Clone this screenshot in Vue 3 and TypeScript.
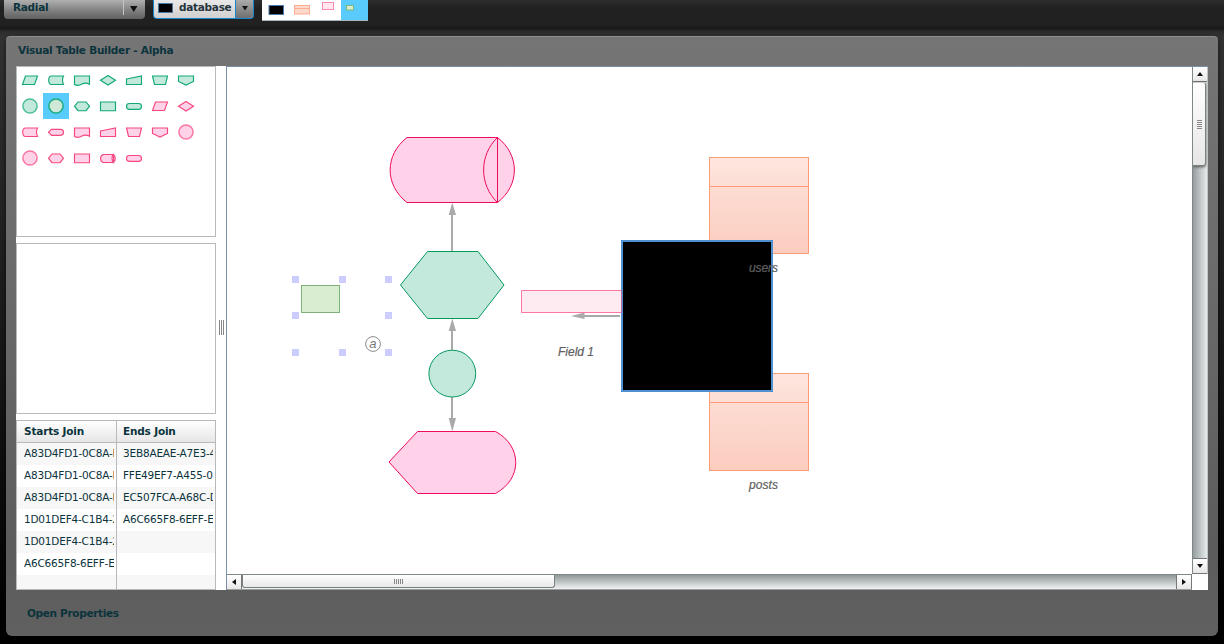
<script setup lang="ts">
interface PaletteItem {
  d: string
  tone: 'green' | 'pink'
  round?: boolean
  selected?: boolean
}

const para = 'M8.5 9H20.5L17.5 17.5H5.5Z'
const stored = 'M8.5 9H20.5Q18.5 13 20.5 17.5H8.5C4.8 17.500 4.800 9 8.500 9Z'
const doc = 'M5.5 9H20.5V17.2Q16.5 15 13 17Q9 19.5 5.5 17.5Z'
const diamond = 'M13 8.5L20.5 13.2L13 18L5.5 13.2Z'
const manual = 'M5.5 12L20.5 9V17.5H5.5Z'
const trapezoid = 'M5.5 9H20.5L18.5 17.5H7.5Z'
const offpage = 'M5.5 9H20.5V14.5L13 18L5.5 14.5Z'
const hexagon = 'M9 9H17L20.5 13.2L17 17.700H9L5.500 13.2Z'
const rect = 'M5.5 9H20.500V17.700H5.500Z'
const pill = 'M8.5 10.5H17.5C21.500 10.5 21.500 16.300 17.5 16.300H8.5C4.500 16.300 4.500 10.5 8.5 10.5Z'
const display = 'M5.5 13.2L8.500 10.300H17.5C21.500 10.300 21.500 16.300 17.5 16.300H8.500Z'
const drum = 'M8.500 9.500H18C21 10.800 21 16.300 18 17.500H8.500C4.600 16.500 4.600 10.500 8.500 9.500ZM18.500 9.500C16.500 11 16.500 16 18.500 17.500Z'

const palette: PaletteItem[] = [
  { d: para, tone: 'green' },
  { d: stored, tone: 'green' },
  { d: doc, tone: 'green' },
  { d: diamond, tone: 'green' },
  { d: manual, tone: 'green' },
  { d: trapezoid, tone: 'green' },
  { d: offpage, tone: 'green' },
  { d: '', tone: 'green', round: true },
  { d: '', tone: 'green', round: true, selected: true },
  { d: hexagon, tone: 'green' },
  { d: rect, tone: 'green' },
  { d: pill, tone: 'green' },
  { d: para, tone: 'pink' },
  { d: diamond, tone: 'pink' },
  { d: stored, tone: 'pink' },
  { d: display, tone: 'pink' },
  { d: doc, tone: 'pink' },
  { d: manual, tone: 'pink' },
  { d: trapezoid, tone: 'pink' },
  { d: offpage, tone: 'pink' },
  { d: '', tone: 'pink', round: true },
  { d: '', tone: 'pink', round: true },
  { d: hexagon, tone: 'pink' },
  { d: rect, tone: 'pink' },
  { d: drum, tone: 'pink' },
  { d: pill, tone: 'pink' },
]

const joins: [string, string][] = [
  ['A83D4FD1-0C8A-F', '3EB8AEAE-A7E3-4'],
  ['A83D4FD1-0C8A-F', 'FFE49EF7-A455-0'],
  ['A83D4FD1-0C8A-F', 'EC507FCA-A68C-D'],
  ['1D01DEF4-C1B4-2', 'A6C665F8-6EFF-E'],
  ['1D01DEF4-C1B4-2', ''],
  ['A6C665F8-6EFF-E', ''],
  ['', ''],
]

const handles: [number, number][] = [
  [292, 276], [339, 276], [385, 276],
  [292, 312], [385, 312],
  [292, 349], [339, 349], [385, 349],
]
</script>

<template>
  <div class="app">
    <header class="toolbar">
      <div class="combo radial">
        <span class="combo-label">Radial</span>
        <i class="sep"></i>
        <svg class="caret" width="8" height="6"><path d="M0 0H7.5L3.75 6Z" /></svg>
      </div>
      <div class="combo database">
        <span class="chip"></span>
        <span class="combo-label">database</span>
        <span class="drop"><svg width="6" height="5"><path d="M0 0H6L3 4.5Z" /></svg></span>
      </div>
      <svg class="swatches" width="106" height="21">
        <rect width="106" height="21" fill="#fff" />
        <rect x="79" width="27" height="21" fill="#5acbfd" />
        <path d="M0 20.5H106" stroke="#a9b6bc" />
        <rect x="7" y="5.500" width="14.500" height="9" stroke="#4b78ad" />
        <rect x="32.500" y="5.500" width="15" height="8.500" fill="#fdd8cb" stroke="#fbae92" />
        <path d="M32 8.500H48" stroke="#fbae92" />
        <rect x="60.500" y="2.500" width="11" height="7" fill="#fee7ef" stroke="#fa8bb2" />
        <rect x="84.500" y="5.500" width="7" height="4.500" fill="#d9edcf" stroke="#7cb87d" />
      </svg>
    </header>

    <main class="panel">
      <h1>Visual Table Builder - Alpha</h1>
      <div class="work">
        <aside>
          <section class="box palette">
            <svg
              v-for="(item, i) in palette"
              :key="i"
              :class="['shape', item.tone, { selected: item.selected }]"
              width="26"
              height="26"
            >
              <circle v-if="item.round" cx="13" cy="13" r="7.100" />
              <path v-else :d="item.d" />
            </svg>
          </section>
          <section class="box"></section>
          <section class="box grid">
            <div class="row head"><span>Starts Join</span><span>Ends Join</span></div>
            <div v-for="(join, i) in joins" :key="i" class="row">
              <span><b>{{ join[0] }}</b></span><span><b>{{ join[1] }}</b></span>
            </div>
          </section>
        </aside>
        <div class="divider"><i></i></div>
        <div class="viewport">
          <svg class="canvas" width="965" height="507" viewBox="227 67 965 507">
            <defs>
              <linearGradient id="tableTop" x2="0" y2="1">
                <stop stop-color="#fde6df" /><stop offset="1" stop-color="#fcded4" />
              </linearGradient>
              <linearGradient id="tableBody" x2="0" y2="1">
                <stop stop-color="#fcdcd2" /><stop offset="1" stop-color="#fbcdbf" />
              </linearGradient>
            </defs>
            <g class="links">
              <path d="M452 251V212M452 350V329M452 397V420M620 316H583" />
              <path class="tip" d="M452.300 202.500L456 215H448.700ZM452.300 318.500L456 331H448.700ZM452.300 431.500L456 418H448.700ZM571 316L584.500 312.500V319Z" />
            </g>
            <g class="pink">
              <path d="M407 137.500H497.500C520 155 520 185 497.500 202.500H407C384.500 185 384.500 155 407 137.500Z" />
              <path d="M497.500 137.500C479 155 479 185 497.500 202.500Z" />
              <path d="M389 462L417.500 431.500H495.500C522.500 446 522.500 479 495.500 493.500H417.500Z" />
            </g>
            <g class="green">
              <path d="M427.500 251.500H478L504 285L478 318.500H427.500L400.500 285Z" />
              <circle cx="452.300" cy="373.600" r="23.400" />
            </g>
            <g class="table">
              <rect x="709.500" y="157.500" width="99" height="29" fill="url(#tableTop)" />
              <rect x="709.500" y="186.500" width="99" height="67" fill="url(#tableBody)" />
              <rect x="709.500" y="373.500" width="99" height="29" fill="url(#tableTop)" />
              <rect x="709.500" y="402.500" width="99" height="68" fill="url(#tableBody)" />
            </g>
            <rect x="622" y="241" width="150" height="150" stroke="#4f90d0" stroke-width="2" />
            <path d="M622 290.500H521.500V312.500H622" fill="#feeaf1" stroke="#fa77a7" />
            <path d="M621.500 290V313" stroke="#b76ba0" />
            <rect x="301.500" y="285.500" width="38" height="27" fill="#d9eed0" stroke="#7cb17b" />
            <rect v-for="(h, i) in handles" :key="i" :x="h[0]" :y="h[1]" width="7" height="7" fill="#ccccff" />
            <circle cx="373" cy="344" r="7.400" fill="#fff" stroke="#8c8c8c" />
            <text class="anchor" x="369.200" y="347.500">a</text>
            <text x="749" y="272" textLength="29">users</text>
            <text x="749" y="489" textLength="29">posts</text>
            <text x="558" y="356" textLength="36">Field 1</text>
          </svg>
          <div class="vbar">
            <span class="arrow"><svg width="6" height="4"><path d="M0 4H6L3 0Z" /></svg></span>
            <span class="thumb"><i></i></span>
            <span class="arrow end"><svg width="6" height="4"><path d="M0 0H6L3 4Z" /></svg></span>
          </div>
          <div class="hbar">
            <span class="arrow"><svg width="4" height="6"><path d="M4 0V6L0 3Z" /></svg></span>
            <span class="thumb"><i></i></span>
            <span class="arrow end"><svg width="4" height="6"><path d="M0 0V6L4 3Z" /></svg></span>
          </div>
          <div class="corner"></div>
        </div>
      </div>
      <footer>Open Properties</footer>
    </main>
  </div>
</template>

<style>
body { margin: 0; background: #000; overflow: hidden; }
</style>

<style scoped>
* { box-sizing: border-box; }
svg { display: block; flex: none; }
.app {
  width: 1224px;
  height: 644px;
  overflow: hidden;
  background: linear-gradient(#333 30px, #242424 200px, #060606 560px, #000 620px);
  font-family: "DejaVu Sans", Verdana, sans-serif;
  font-size: 10.5px;
  color: #0b333c;
}
.toolbar {
  height: 36px;
  display: flex;
  align-items: flex-start;
  padding-left: 4px;
  background: linear-gradient(#2d2d2d, #212121 8px, #212121 25px, #171717 28px, #2d2d2d 32px, #333);
}
.combo { display: flex; height: 19px; border-radius: 0 0 4px 4px; font-weight: bold; line-height: 14px; letter-spacing: -.28px; }
.radial {
  width: 141px;
  padding-left: 9px;
  background: linear-gradient(#b0b0b0, #7a7a7a 12px, #606060);
}
.radial .combo-label { width: 110px; }
.radial .sep { width: 1px; height: 15px; background: #c5c5c5; }
.radial .caret { margin: 6px 0 0 6px; fill: #111; }
.database {
  width: 101px;
  margin-left: 8px;
  background: linear-gradient(#e8e8e8, #d0d0d0);
  border: 1px solid #1686d1;
  border-top: 0;
  color: #25333c;
  overflow: hidden;
}
.chip { width: 15px; height: 10px; margin: 3px 6px 0 4px; background: #000; border: 1px solid #4a76a8; }
.database .combo-label { width: 56px; white-space: nowrap; }
.drop { flex: 1; border-left: 1px solid #1686d1; background: linear-gradient(#aaa, #707070); padding: 6px 0 0 6px; }
.drop svg { fill: #151515; }
.swatches { margin-left: 8px; }
.panel {
  width: 1212px;
  height: 600px;
  margin-left: 6px;
  padding: 0 10px;
  border-radius: 4px 4px 6px 6px;
  border-top: 1px solid #8e8e8e;
  background: linear-gradient(#757575, #6b6b6b 240px, #5c5c5c 510px, #606060);
  box-shadow: 0 2px 5px #0009;
}
h1 { margin: 0; height: 29px; padding: 6px 0 0 2px; font-size: 10.5px; line-height: 14px; letter-spacing: -.25px; }
.work { display: flex; width: 1192px; height: 524px; background: #fff; }
aside { width: 200px; display: grid; grid-template-rows: 171px 171px 170px; row-gap: 6px; }
.box { border: 1px solid #b7babc; background: #fff; overflow: hidden; }
.palette { display: grid; grid-template-columns: repeat(7, 26px); grid-auto-rows: 26px; align-content: start; }
.shape.selected { background: #5acbfd; }
.green { fill: #c3e8dc; stroke: #06995e; }
.pink { fill: #ffd2e9; stroke: #ef0b5d; }
.shape.green { stroke: #10a974; stroke-width: 1.15; }
.shape.pink { stroke: #f6487f; stroke-width: 1.15; }
.shape circle { stroke-width: 1.5; stroke-opacity: .7; }
.shape.selected circle { fill: #cfe8d8; stroke-opacity: .9; }
.row { display: flex; height: 22px; line-height: 20px; }
.row:nth-child(even) { background: #f7f7f7; }
.row span { width: 99px; padding: 0 2px 0 7px; white-space: nowrap; overflow: hidden; }
.row span + span { padding-left: 6px; border-left: 1px solid #b7babc; }
.row b { display: block; overflow: hidden; height: 22px; font-weight: normal; font-size: 10.5px; letter-spacing: -.2px; }
.row.head { height: 22px; line-height: 20px; font-weight: bold; letter-spacing: -.18px; border-bottom: 1px solid #b7babc; background: linear-gradient(#fff, #e6e6e6); }
.divider { width: 10px; padding: 254px 0 0 3px; }
.divider i { display: block; width: 5px; height: 15px; background: repeating-linear-gradient(90deg, #888 0 1px, transparent 1px 2px); }
.viewport {
  width: 982px;
  height: 524px;
  display: grid;
  grid-template-columns: 965px 16px;
  grid-template-rows: 507px 16px;
  border-left: 1px solid #7c8ea8;
  border-top: 1px solid #7c8ea8;
}
.canvas text { font: italic 12px "Liberation Sans", Arial, sans-serif; fill: #606060; stroke: #606060; stroke-width: .2px; }
.canvas .anchor { font-size: 13px; fill: #777; stroke: none; }
.links { fill: none; stroke: #aaa; stroke-width: 2; }
.links .tip { fill: #aaa; stroke: none; }
.table { stroke: #fb9b78; }
.vbar, .hbar { display: flex; overflow: hidden; }
.vbar { flex-direction: column; border-left: 1px solid #7f8788; border-right: 1px solid #bfc3c4; background: linear-gradient(90deg, #959d9e, #e8ebeb); }
.hbar { border-top: 1px solid #7f8788; border-bottom: 1px solid #989d9e; background: linear-gradient(#8f9899, #f0f2f2); }
.arrow { display: grid; place-items: center; flex: none; background: linear-gradient(#fff, #e8e8e8); fill: #111; }
.vbar .arrow { height: 15px; border-bottom: 1px solid #777; }
.hbar .arrow { width: 15px; border-right: 1px solid #777; }
.vbar .end { margin-top: auto; border-top: 1px solid #777; border-bottom: 1px solid #777; height: 16px; }
.hbar .end { margin-left: auto; border-left: 1px solid #777; border-right: 1px solid #777; width: 16px; }
.thumb { display: grid; place-items: center; flex: none; border: 1px solid #7b8081; }
.vbar .thumb { height: 84px; width: 13px; border-top-color: #ccc; border-left: 0; border-radius: 0 3px 3px 0; background: linear-gradient(#fff, #e6e6e6); box-shadow: 0 1px 3px #555; }
.hbar .thumb { width: 313px; height: 13px; border-top: 0; border-radius: 0 0 3px 3px; background: linear-gradient(#fff, #e8e8e8); }
.vbar .thumb i { width: 5px; height: 9px; background: repeating-linear-gradient(#888 0 1px, transparent 1px 2px); }
.hbar .thumb i { width: 9px; height: 5px; background: repeating-linear-gradient(90deg, #888 0 1px, transparent 1px 2px); }
.corner { background: #fff; }
footer { padding: 16px 0 0 11px; line-height: 14px; font-weight: bold; letter-spacing: -.32px; }
</style>
